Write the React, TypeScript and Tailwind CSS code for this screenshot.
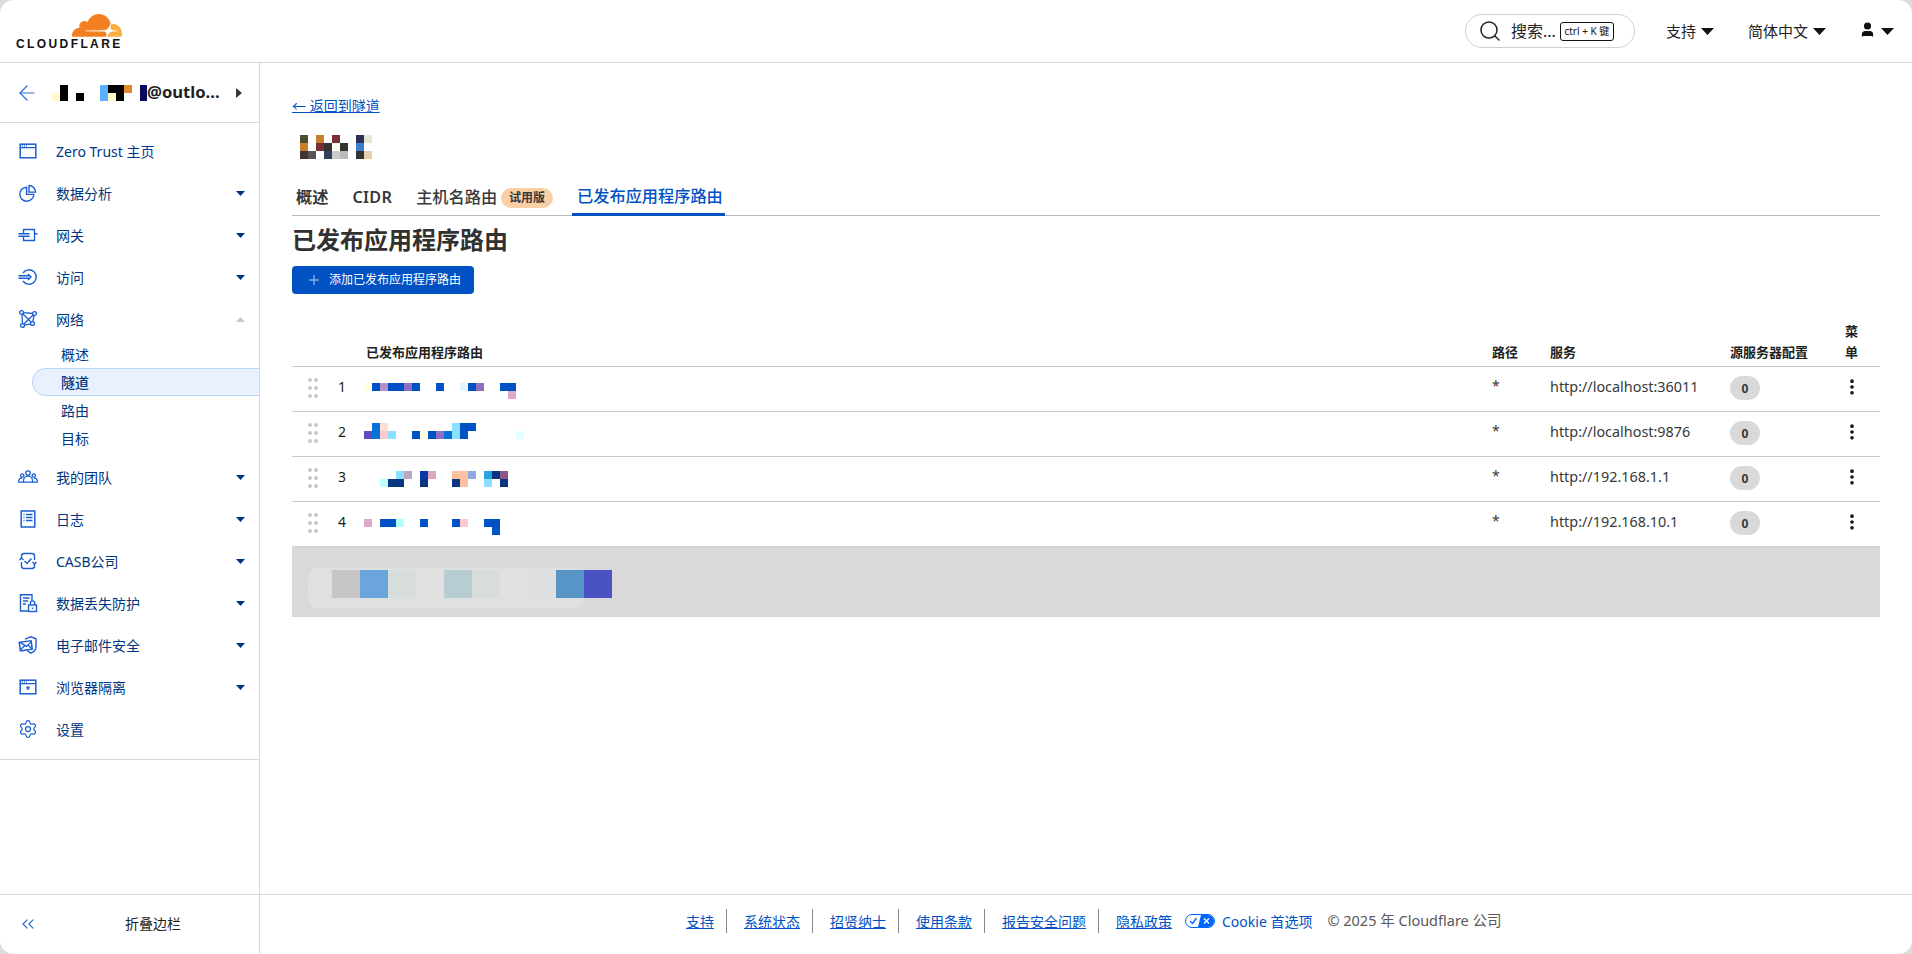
import { type ReactNode } from 'react';
import { ArrowLeft, ChevronsLeft, EllipsisVertical, Plus, Search, Settings, User } from 'lucide-react';

type Px = [number, number, string, number?];

const BL = '#0051c3';
const NAVY = '#0a3580';

const ACCOUNT_PX: Px[] = [
  [1, 0, '#000'], [6, 0, '#5cb0ff'], [7, 0, '#000', 2], [9, 0, '#e08a30'], [11, 0, '#0a0a60'],
  [0, 1, '#fff8c8'], [1, 1, '#000'], [3, 1, '#000'], [6, 1, '#5cb0ff'], [7, 1, '#fff8c8'], [8, 1, '#000'], [11, 1, '#0a0a60'],
];

const NAME_PX: Px[] = [
  [0, 0, '#4d4d30'], [2, 0, '#c47f30'], [4, 0, '#7a3033'], [7, 0, '#2f2f55'], [8, 0, '#e6e6d4'],
  [0, 1, '#c47f30'], [2, 1, '#7a3033'], [3, 1, '#333'], [4, 1, '#fffff0'], [5, 1, '#333'], [7, 1, '#3a80c8'],
  [0, 2, '#40352f'], [1, 2, '#555'], [3, 2, '#34415a'], [4, 2, '#ccc'], [5, 2, '#bbb'], [7, 2, '#333'], [8, 2, '#e6d0a8'],
];

const routes: { top: number; px: Px[]; service: string }[] = [
  {
    top: 16,
    service: 'http://localhost:36011',
    px: [
      [0, 0, '#fffde0'], [1, 0, BL], [2, 0, '#b58fc4'], [3, 0, BL, 2], [5, 0, '#8f6fc4'], [6, 0, BL], [9, 0, BL],
      [12, 0, '#e3f6fd'], [13, 0, BL], [14, 0, '#8f6fc4'], [17, 0, BL, 2], [18, 1, '#dfa8c9'],
    ],
  },
  {
    top: 11,
    service: 'http://localhost:9876',
    px: [
      [1, 0, '#0772d8'], [2, 0, '#ffe0d0'], [11, 0, '#8be0ff'], [12, 0, BL, 2],
      [0, 1, '#5b4fc0'], [1, 1, '#0772d8'], [2, 1, '#ffc8d0'], [3, 1, '#8be0ff'], [6, 1, BL], [7, 1, '#fffde0'], [8, 1, BL],
      [9, 1, '#8f6fc4'], [10, 1, '#0772d8'], [11, 1, '#8be0ff'], [12, 1, BL], [19, 1, '#e0ffff'],
    ],
  },
  {
    top: 14,
    service: 'http://192.168.1.1',
    px: [
      [4, 0, '#8be0ff'], [5, 0, '#b8a8bc'], [7, 0, '#0a3aa8'], [8, 0, '#e0a8bc'], [11, 0, '#ffc0a0', 2], [13, 0, '#8fa8e0'],
      [15, 0, '#2aa4e0'], [16, 0, NAVY], [17, 0, '#8a5a85'],
      [2, 1, '#c0ffff'], [3, 1, NAVY, 2], [7, 1, NAVY], [11, 1, NAVY], [12, 1, '#ffc0a0'], [15, 1, '#8be0ff'], [17, 1, NAVY],
    ],
  },
  {
    top: 17,
    service: 'http://192.168.10.1',
    px: [
      [0, 0, '#dfa8c9'], [2, 0, BL, 2], [4, 0, '#b0ffff'], [7, 0, BL], [11, 0, BL], [12, 0, '#ffc8d0'], [15, 0, BL, 2], [16, 1, BL],
    ],
  },
];

const GREY_BLOCKS = ['#c6c6c6', '#6aa6dc', '#d8dede', '#e0e0e0', '#b8cdd1', '#d8dcdc', '#e1e1e1', '#dfdfdf', '#5795c7', '#4953c4'];

// blurred-out names in the screenshot
function Pixels({ px, w, h, top = 0 }: { px: Px[]; w: number; h: number; top?: number }) {
  return (
    <svg width={w} height={h} className="block shrink-0">
      {px.map(([x, y, fill, span = 1], i) => (
        <rect key={i} x={x * 8} y={top + y * 8} width={span * 8} height={8} fill={fill} />
      ))}
    </svg>
  );
}

function Logo() {
  return (
    <div className="flex w-[106px] flex-col items-end">
      <svg width="50" height="25" viewBox="0 5.6 24 12">
        <path fill="#f38020" d="M16.5088 16.8447c.1475-.5068.0908-.9707-.1553-1.3154-.2246-.3164-.6045-.499-1.0615-.5205l-8.6592-.1123a.1559.1559 0 0 1-.1333-.0713c-.0283-.042-.0351-.0986-.021-.1553.0278-.084.1123-.1484.2036-.1562l8.7359-.1123c1.0351-.0489 2.1601-.8868 2.5537-1.9136l.499-1.3013c.0215-.0561.0293-.1128.0147-.168-.5625-2.5463-2.835-4.4453-5.5499-4.4453-2.5039 0-4.6284 1.6177-5.3876 3.8614-.4927-.3658-1.1187-.5625-1.794-.499-1.2026.119-2.1665 1.083-2.2861 2.2856-.0283.31-.0069.6128.0635.894C1.5683 13.171 0 14.7754 0 16.752c0 .1748.0142.3515.0352.5273.0141.083.0844.1475.1689.1475h15.9814c.0909 0 .1758-.0645.2032-.1553l.12-.4268z" />
        <path fill="#faae40" d="M19.2656 11.2813c-.0771 0-.1611 0-.2383.0112-.0566 0-.1054.0415-.127.0976l-.3378 1.1744c-.1475.5068-.0918.9707.1543 1.3164.2256.3164.6055.498 1.0625.5195l1.8437.1133c.0557 0 .1055.0263.1329.0703.0283.043.0351.1074.0214.1562-.0283.084-.1132.1485-.204.1553l-1.921.1123c-1.041.0488-2.1582.8867-2.5527 1.914l-.1406.3585c-.0283.0713.0215.1416.0986.1416h6.5977c.0771 0 .1474-.0489.169-.126.1122-.4082.1757-.837.1757-1.2803 0-2.6025-2.125-4.727-4.7344-4.727" />
      </svg>
      <span className="mt-[1px] w-full font-['Liberation_Sans'] text-[12px] leading-[12px] font-bold tracking-[2.4px] whitespace-nowrap text-[#111]">
        CLOUDFLARE
      </span>
    </div>
  );
}

function Caret({ className }: { className: string }) {
  return (
    <svg viewBox="0 0 10 6" preserveAspectRatio="none" className={className} fill="currentColor">
      <path d="M0 0h10L5 6z" />
    </svg>
  );
}

function NavIcon({ children }: { children: ReactNode }) {
  return (
    <svg viewBox="0 0 20 20" width="20" height="20" fill="none" stroke="#1a5fd0" strokeWidth="1.3" className="shrink-0">
      {children}
    </svg>
  );
}

const icons: Record<string, ReactNode> = {
  home: (
    <NavIcon>
      <rect x="2.2" y="3.2" width="15.6" height="13.6" strokeWidth="1.5" />
      <path d="M2.2 6.6h15.6" />
      <path d="M4 5h.8M6 5h.8M8 5h.8" />
    </NavIcon>
  ),
  chart: (
    <NavIcon>
      <path d="M8.6 4.2a7 7 0 1 0 7.2 7.2H8.6z" strokeWidth="1.4" />
      <path d="M11 2.5a6.6 6.6 0 0 1 6.6 6.6H11z" strokeWidth="1.4" />
    </NavIcon>
  ),
  gateway: (
    <NavIcon>
      <path d="M5.5 8V4.5h11v11h-11V12" strokeWidth="1.4" />
      <path d="M.5 8.8h11M.5 11.2h11M16.5 8.8h3" strokeWidth="1.4" />
    </NavIcon>
  ),
  access: (
    <NavIcon>
      <path d="M5 6a7.2 7.2 0 1 1 0 8" strokeWidth="1.4" />
      <path d="M.5 8.8h12M.5 11.2h12M10 7l3 3-3 3" strokeWidth="1.4" />
    </NavIcon>
  ),
  network: (
    <NavIcon>
      <circle cx="3.5" cy="3.5" r="1.9" />
      <circle cx="16.5" cy="4.5" r="1.9" />
      <circle cx="4.5" cy="16.5" r="1.9" />
      <circle cx="14.5" cy="14.5" r="1.9" />
      <path d="M5.4 3.6l9.2.9M4 5.4l.5 9.2M6.4 16.2l6.2-1.4M16.2 6.4l-1.5 6.2M5 5l8.2 8.2M15.1 6L5.8 15" />
    </NavIcon>
  ),
  team: (
    <NavIcon>
      <circle cx="10" cy="6" r="2.2" />
      <circle cx="4.2" cy="8.6" r="1.7" />
      <circle cx="15.8" cy="8.6" r="1.7" />
      <path d="M5.5 15v-1.4a4.5 4.5 0 0 1 9 0V15M.5 15v-.8a3.6 3.6 0 0 1 3.6-3M19.5 15v-.8a3.6 3.6 0 0 0-3.6-3M.2 15.2h19.6" />
    </NavIcon>
  ),
  logs: (
    <NavIcon>
      <rect x="3.2" y="2" width="13.6" height="16" strokeWidth="1.5" />
      <path d="M5.5 5.5h1M8 5.5h6.5M5.5 8.5h1M8 8.5h6.5M5.5 11.5h1M8 11.5h6.5" />
    </NavIcon>
  ),
  casb: (
    <NavIcon>
      <path d="M3.5 7V5a2.5 2.5 0 0 1 2.5-2.5h8A2.5 2.5 0 0 1 16.5 5v4M16.5 13v2a2.5 2.5 0 0 1-2.5 2.5H6A2.5 2.5 0 0 1 3.5 15v-4" strokeWidth="1.4" />
      <path d="M1.5 9l2-2 2 2M14.5 11l2 2 2-2M6.5 10l2.5 2.5 4.5-5" strokeWidth="1.4" />
    </NavIcon>
  ),
  dlp: (
    <NavIcon>
      <path d="M10 18H2.5V1.8h11.5v6" strokeWidth="1.4" />
      <path d="M5 5h6.5M5 8h5M5 11h3" strokeWidth="1.4" />
      <rect x="10.5" y="12" width="8" height="6.5" strokeWidth="1.4" />
      <path d="M12.4 12V10a2.1 2.1 0 0 1 4.2 0v2" strokeWidth="1.4" />
      <path d="M14.5 14.5v1.5" strokeWidth="1.4" />
    </NavIcon>
  ),
  email: (
    <NavIcon>
      <path d="M7 4.2L13 1.8l5 2v7.6c0 3.2-2.2 5.5-5 6.8-1.5-.6-2.6-1.4-3.6-2.4" strokeWidth="1.4" />
      <rect x="1.8" y="6.5" width="12" height="8.5" strokeWidth="1.5" transform="rotate(-8 8 11)" />
      <path d="M2 7.4l6.5 4 5-5M2.6 14.6L7 10.5M13.8 13.6L9.8 10" />
    </NavIcon>
  ),
  browser: (
    <NavIcon>
      <rect x="2.2" y="3.2" width="15.6" height="13.6" strokeWidth="1.5" />
      <path d="M2.2 6.6h15.6M4 5h.8M6 5h.8M8 5h.8" />
      <path d="M10 9.2v3.6M8.4 10.1l3.2 1.8M11.6 10.1l-3.2 1.8" strokeWidth="1.2" />
    </NavIcon>
  ),
  settings: <Settings size={20} color="#1a5fd0" strokeWidth={1.5} className="shrink-0" />,
};

function NavRow({ icon, label, caret }: { icon: string; label: string; caret?: 'down' | 'up' }) {
  return (
    <div className="flex h-[42px] items-center pr-[14px] pl-[18px] text-[14px] text-[#003681]">
      <span className="flex w-[38px] shrink-0">{icons[icon]}</span>
      <span className="flex-1">{label}</span>
      {caret === 'down' && <Caret className="h-[5px] w-[9px] text-[#003681]" />}
      {caret === 'up' && <Caret className="h-[5px] w-[9px] rotate-180 text-[#c3cad3]" />}
    </div>
  );
}

function Sidebar() {
  return (
    <aside className="flex w-[260px] shrink-0 flex-col border-r border-[#d9d9d9]">
      <div className="flex h-[60px] shrink-0 items-center border-b border-[#d9d9d9] pr-[17px] pl-[15px]">
        <ArrowLeft size={24} color="#2c6ad3" strokeWidth={1.2} className="mr-[13px] shrink-0" />
        <Pixels px={ACCOUNT_PX} w={95} h={16} />
        <span className="flex-1 text-[16.6px] font-bold whitespace-nowrap text-[#1d1f20]">@outlo...</span>
        <svg viewBox="0 0 6 10" className="h-[10px] w-[6px]" fill="#36393a">
          <path d="M0 0l6 5-6 5z" />
        </svg>
      </div>
      <nav className="flex flex-col border-b border-[#d9d9d9] pt-[7px] pb-[9px]">
        <NavRow icon="home" label="Zero Trust 主页" />
        <NavRow icon="chart" label="数据分析" caret="down" />
        <NavRow icon="gateway" label="网关" caret="down" />
        <NavRow icon="access" label="访问" caret="down" />
        <NavRow icon="network" label="网络" caret="up" />
        <div className="mb-[4px] flex flex-col text-[14px] text-[#003681]">
          <div className="flex h-[28px] items-center pl-[61px]">概述</div>
          <div className="ml-[32px] flex h-[28px] items-center rounded-l-full border border-r-0 border-[#bcd6fb] bg-[#e8f1fd] pl-[28px] font-medium">隧道</div>
          <div className="flex h-[28px] items-center pl-[61px]">路由</div>
          <div className="flex h-[28px] items-center pl-[61px]">目标</div>
        </div>
        <NavRow icon="team" label="我的团队" caret="down" />
        <NavRow icon="logs" label="日志" caret="down" />
        <NavRow icon="casb" label="CASB公司" caret="down" />
        <NavRow icon="dlp" label="数据丢失防护" caret="down" />
        <NavRow icon="email" label="电子邮件安全" caret="down" />
        <NavRow icon="browser" label="浏览器隔离" caret="down" />
        <NavRow icon="settings" label="设置" />
      </nav>
      <div className="flex-1" />
      <div className="flex h-[60px] shrink-0 items-center border-t border-[#d9d9d9] pb-[2px] pl-[18px]">
        <ChevronsLeft size={20} color="#2c6ad3" strokeWidth={1.4} className="shrink-0" />
        <span className="ml-[87px] text-[14px] text-[#1d1f20]">折叠边栏</span>
      </div>
    </aside>
  );
}

function Header() {
  return (
    <header className="flex h-[63px] shrink-0 items-center border-b border-[#d9d9d9] pr-[18px] pl-[16px] text-[15px] text-[#222]">
      <Logo />
      <div className="flex-1" />
      <div className="flex h-[34px] w-[170px] items-center rounded-full border border-[#d0d0d0] pl-[12px]">
        <Search size={24} color="#222" strokeWidth={1.5} className="shrink-0" />
        <span className="ml-[9px] text-[16px]">搜索...</span>
        <span className="ml-[4px] flex h-[19px] w-[54px] items-center justify-center rounded-[3px] border border-[#111] text-[10px] whitespace-nowrap text-[#111]">ctrl + K 键</span>
      </div>
      <span className="ml-[31px]">支持</span>
      <Caret className="ml-[5px] h-[7px] w-[13px] text-[#111]" />
      <span className="ml-[34px]">简体中文</span>
      <Caret className="ml-[5px] h-[7px] w-[13px] text-[#111]" />
      <User size={17} color="#111" fill="#111" className="mb-[4px] ml-[33px]" />
      <Caret className="ml-[5px] h-[7px] w-[13px] text-[#111]" />
    </header>
  );
}

function Tabs() {
  return (
    <div className="flex h-[36px] items-stretch border-b border-[#b7bbbd] text-[16.2px] font-medium text-[#36393a]">
      <div className="flex items-center px-[4px] font-semibold">概述</div>
      <div className="ml-[16px] flex items-center px-[4px] font-semibold tracking-[0.3px]">CIDR</div>
      <div className="ml-[16px] flex items-center px-[4px]">
        主机名路由
        <span className="ml-[4px] flex h-[20px] w-[52px] items-center justify-center rounded-full bg-[#fbcfa5] text-[12px] font-semibold text-[#36393a]">试用版</span>
      </div>
      <div className="-mb-[1px] ml-[15px] flex items-center border-b-[3px] border-[#0051c3] pr-[2px] pl-[5px] text-[#0051c3]">已发布应用程序路由</div>
    </div>
  );
}

const GRID = 'grid grid-cols-[46px_26px_1128px_58px_180px_115px_35px]';

function RouteRow({ n, route }: { n: number; route: (typeof routes)[number] }) {
  return (
    <div className={`${GRID} h-[45px] items-center border-t border-[#c8c8c8] text-[14px] font-normal text-[#36393a]`}>
      <div className="grid w-[10px] translate-x-[16px] -translate-y-[1px] grid-cols-2 gap-x-[2px] gap-y-[4px]">
        {Array.from({ length: 6 }).map((_, i) => (
          <span key={i} className="size-[4px] rounded-full bg-[#c8c8c8]" />
        ))}
      </div>
      <span className="-translate-y-[3px] text-[#1d1f20]">{n}</span>
      <Pixels px={route.px} w={180} h={44} top={route.top} />
      <span className="-translate-y-[4px]">*</span>
      <span className="-translate-y-[3px] text-[14.4px] whitespace-nowrap">{route.service}</span>
      <span className="flex h-[24px] w-[30px] -translate-y-[1px] items-center justify-center rounded-full bg-[#d9d9d9] text-[12px] font-bold">0</span>
      <EllipsisVertical size={20} color="#111" strokeWidth={2.4} className="-translate-x-[3px] -translate-y-[2px]" />
    </div>
  );
}

function RoutesTable() {
  return (
    <div className="mt-[27px] text-[13px] leading-[21px] font-semibold text-[#1d1f20]">
      <div className={`${GRID} items-end pb-[3px]`}>
        <span />
        <span />
        <span className="pl-[2px]">已发布应用程序路由</span>
        <span>路径</span>
        <span>服务</span>
        <span>源服务器配置</span>
        <span className="w-[14px]">菜单</span>
      </div>
      {routes.map((r, i) => (
        <RouteRow key={i} n={i + 1} route={r} />
      ))}
      <div className="flex h-[71px] items-center border-t border-[#d0d0d0] bg-[#d9d9d9] pt-[4px] pl-[16px]">
        <div className="relative flex h-[28px] items-center pl-[24px]">
          <span className="absolute top-[-2px] bottom-[-10px] left-0 w-[276px] rounded-[10px] bg-[#dfe1e1]" />
          {GREY_BLOCKS.map((c, i) => (
            <svg key={i} width="28" height="28" className="relative block">
              <rect width="28" height="28" fill={c} />
            </svg>
          ))}
        </div>
      </div>
    </div>
  );
}

function Footer() {
  const links = ['支持', '系统状态', '招贤纳士', '使用条款', '报告安全问题', '隐私政策'];
  return (
    <footer className="flex h-[60px] shrink-0 items-center border-t border-[#d9d9d9] pb-[7px] pl-[426px] text-[14px]">
      <div className="flex items-center">
        {links.map((l, i) => (
          <a
            key={l}
            href="#"
            className={`flex h-[24px] items-center text-[#0051c3] underline ${i < links.length - 1 ? 'mr-[17px] border-r border-[#8a8a8a] pr-[12px]' : 'mr-[13px]'}`}
          >
            {l}
          </a>
        ))}
        <svg width="30" height="14" viewBox="0 0 30 14" className="mr-[7px]">
          <rect x="0.5" y="0.5" width="29" height="13" rx="6.5" fill="#fff" stroke="#0066ff" />
          <path d="M16 1h7a6 6 0 0 1 0 12h-10z" fill="#0066ff" />
          <path d="M5 7l2.5 2.5L11.5 4" fill="none" stroke="#0066ff" strokeWidth="1.4" />
          <path d="M19 4.5l5 5M24 4.5l-5 5" stroke="#fff" strokeWidth="1.4" />
        </svg>
        <span className="text-[#0051c3]">Cookie 首选项</span>
        <span className="ml-[15px] text-[14.5px] whitespace-nowrap text-[#595959]">© 2025 年 Cloudflare 公司</span>
      </div>
    </footer>
  );
}

export default function App() {
  return (
    <div className="h-[954px] w-[1912px] overflow-hidden bg-[#dcdcdc] font-['Noto_Sans','Noto_Sans_CJK_SC',sans-serif]">
      <div className="flex h-full flex-col overflow-hidden rounded-[14px] bg-white">
        <Header />
        <div className="flex min-h-0 flex-1">
          <Sidebar />
          <main className="flex min-w-0 flex-1 flex-col">
            <div className="flex-1 pt-[30px] pr-[32px] pl-[32px]">
              <a href="#" className="text-[14px] leading-[20px] text-[#0051c3] underline">← 返回到隧道</a>
              <div className="mt-[18px] ml-[8px]">
                <Pixels px={NAME_PX} w={72} h={24} />
              </div>
              <div className="mt-[21px]">
                <Tabs />
              </div>
              <h1 className="mt-[8px] text-[24px] leading-[32px] font-bold text-[#313131]">已发布应用程序路由</h1>
              <button className="mt-[10px] flex h-[28px] w-[182px] items-center rounded-[4px] bg-[#0051c3] pl-[14px] text-[12px] text-white">
                <Plus size={16} color="#bcd3f2" strokeWidth={1.5} className="mr-[7px]" />
                添加已发布应用程序路由
              </button>
              <RoutesTable />
            </div>
            <Footer />
          </main>
        </div>
      </div>
    </div>
  );
}
